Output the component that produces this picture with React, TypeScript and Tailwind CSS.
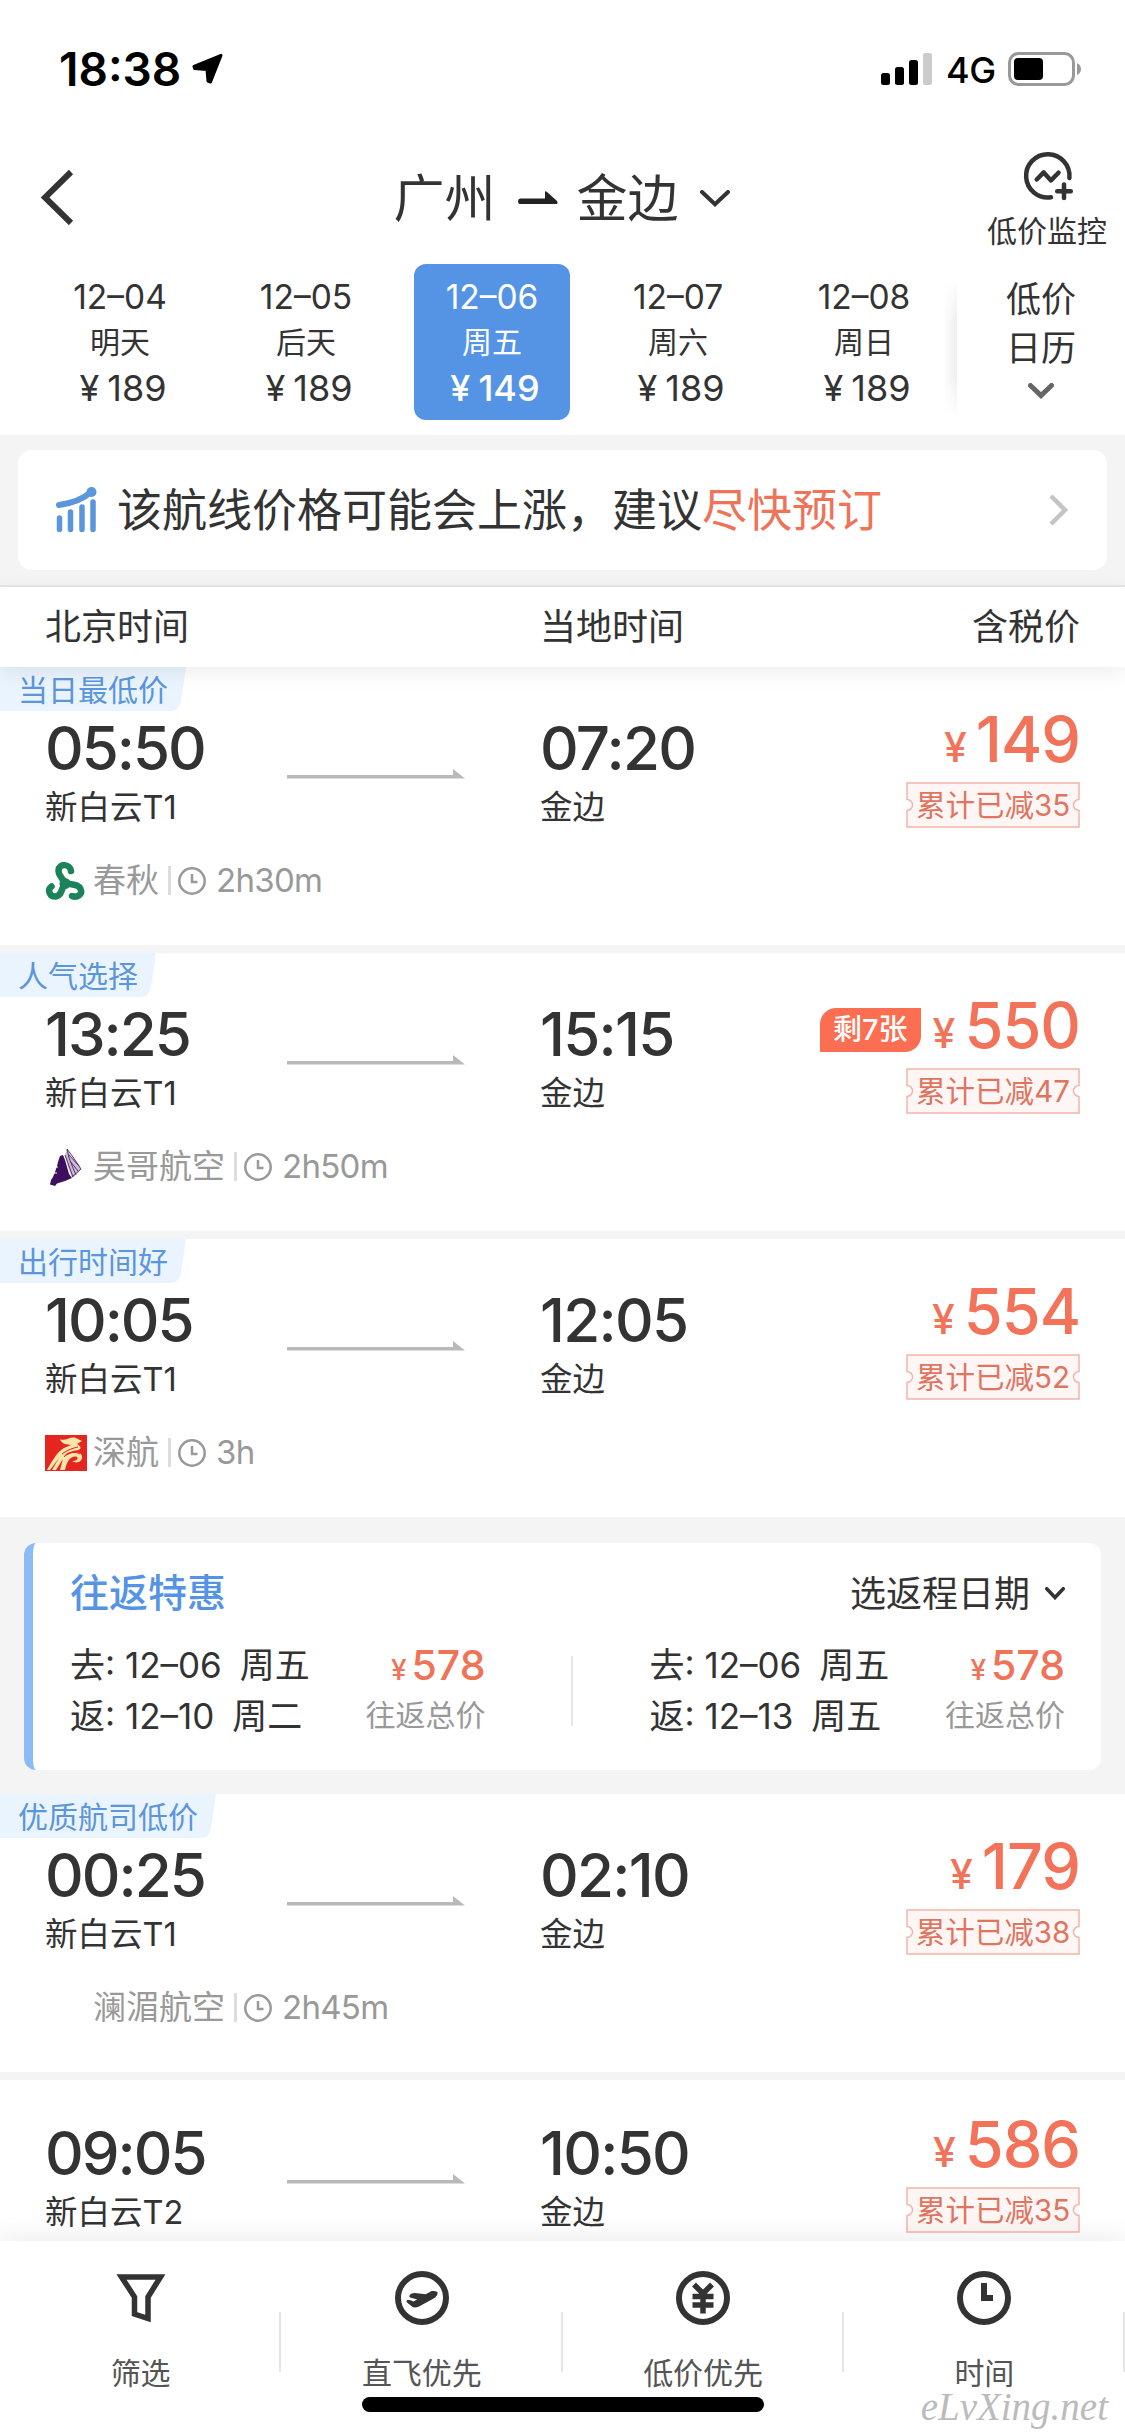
import React, { ReactNode } from "react";
import clsx from "clsx";

type Flight = {
  tag?: string;
  depart: string;
  arrive: string;
  from: string;
  to: string;
  price: string;
  discount: string;
  left?: string;
  airline?: string;
  logo?: ReactNode;
  duration?: string;
};

const dates = [
  { date: "12–04", day: "明天", price: "189" },
  { date: "12–05", day: "后天", price: "189" },
  { date: "12–06", day: "周五", price: "149", active: true },
  { date: "12–07", day: "周六", price: "189" },
  { date: "12–08", day: "周日", price: "189" },
];

const SpringLogo = () => (
  <svg width="40" height="40" viewBox="0 0 40 40" fill="none" stroke="#1c8259" strokeWidth="6.500" strokeLinecap="round">
    <path d="M26 10C25 2.500 14 2 13.500 9.500C13.200 14.500 18 17 19.500 22" />
    <path d="M6.500 25.500C2 29 4.500 36 11 35.500C17 34.500 16.500 27 20 22" />
    <path d="M27 35C32 37 38 33.500 35.500 28C33.500 22.500 27 24 20 22" />
    <circle cx="20" cy="22.500" r="5.500" fill="#1c8259" stroke="none" />
  </svg>
);

const AngkorLogo = () => (
  <svg width="40" height="40" viewBox="0 0 40 40">
    <path d="M15 9L18 8L20 13L22 20L24 27L27 31L20 34L12 36.500L10 39L5 37.500L6 33L8 30L10 25L12 19L13 15Z" fill="#3e0f5e" />
    <path d="M22 2L26 9L32 15L36 22L31 28L27 31L23 20L20 9Z" fill="#c9bbd2" />
    <path d="M22 2L24 11L28 21L31 28M20 8L28 30M24 8L34 19M25 14L33 24M27 30L36 22M22 2L28 10L36 22" stroke="#5b3573" strokeWidth="1" fill="none" />
    <path d="M10 20H13M8 26H12" stroke="#fff" strokeWidth="1" />
  </svg>
);

const ShenzhenLogo = () => (
  <svg width="42" height="36" viewBox="0 0 42 36">
    <rect width="42" height="36" fill="#e5251f" />
    <path
      d="M15 4C20 7 25 1 31 3L37 6L32 9C36 11 37 14 33 15C28 16 22 17 19 21C26 18 35 15 37 21C38 27 31 29 27 26C30 26 34 25 32 22C27 20 22 25 20 35H15L18 24L11 35H7L14 23L5 35H2C7 26 12 17 19 13L26 10C22 9 17 10 15 4Z"
      fill="#fbe3ac"
    />
    <path d="M17 19C22 15 28 13 33 12M19 22C24 17 30 16 35 19" stroke="#e5251f" strokeWidth="1" fill="none" />
  </svg>
);

const flights: Flight[] = [
  { tag: "当日最低价", depart: "05:50", arrive: "07:20", from: "新白云T1", to: "金边", price: "149", discount: "35", airline: "春秋", logo: <SpringLogo />, duration: "2h30m" },
  { tag: "人气选择", depart: "13:25", arrive: "15:15", from: "新白云T1", to: "金边", price: "550", discount: "47", left: "剩7张", airline: "吴哥航空", logo: <AngkorLogo />, duration: "2h50m" },
  { tag: "出行时间好", depart: "10:05", arrive: "12:05", from: "新白云T1", to: "金边", price: "554", discount: "52", airline: "深航", logo: <ShenzhenLogo />, duration: "3h" },
  { tag: "优质航司低价", depart: "00:25", arrive: "02:10", from: "新白云T1", to: "金边", price: "179", discount: "38", airline: "澜湄航空", duration: "2h45m" },
  { depart: "09:05", arrive: "10:50", from: "新白云T2", to: "金边", price: "586", discount: "35" },
];

const roundTrips = [
  { go: ["12–06", "周五"], back: ["12–10", "周二"], price: "578" },
  { go: ["12–06", "周五"], back: ["12–13", "周五"], price: "578" },
];

function Chevron({ width, height, stroke = 4, color = "#333" }: { width: number; height: number; stroke?: number; color?: string }) {
  return (
    <svg width={width} height={height} fill="none" stroke={color} strokeWidth={stroke} className="shrink-0">
      <path d={`M${stroke / 2} ${stroke / 2}L${width / 2} ${height - stroke * 0.7}L${width - stroke / 2} ${stroke / 2}`} strokeLinecap="round" />
    </svg>
  );
}

function StatusBar() {
  return (
    <div className="flex h-[138px] shrink-0 items-center justify-between pl-[59px] pr-[43px]">
      <div className="flex items-center gap-[11px]">
        <span className="text-[46px] leading-none font-semibold text-black">18:38</span>
        <svg width="31" height="30" viewBox="0 0 31 30">
          <path d="M29 1.500L18.500 28L16 27L15 15.500L2.500 14.500L2 12.500Z" stroke="#000" strokeWidth="3" strokeLinejoin="round" />
        </svg>
      </div>
      <div className="flex items-center">
        <svg width="52" height="34" viewBox="0 0 52 34">
          <rect x="0" y="21" width="9" height="12" rx="2.500" />
          <rect x="14" y="15" width="9" height="18" rx="2.500" />
          <rect x="28" y="8" width="9" height="25" rx="2.500" />
          <rect x="42" y="1" width="9" height="32" rx="2.500" fill="#ccc" />
        </svg>
        <span className="ml-[13px] w-[62px] pt-[2px] text-[36px] leading-none font-medium tracking-[-0.5px] text-black">4G</span>
        <svg width="74" height="36" viewBox="0 0 74 36">
          <rect x="1.500" y="2.500" width="64" height="31" rx="9" fill="none" stroke="#999" strokeWidth="3" />
          <rect x="6" y="7" width="29" height="22" rx="4" />
          <path d="M69 12Q73 14 73 18Q73 22 69 24Z" fill="#999" />
        </svg>
      </div>
    </div>
  );
}

function Header() {
  return (
    <div className="flex h-[118px] shrink-0 items-start">
      <div className="flex h-[118px] w-[250px] items-center pl-[40px]">
        <svg width="34" height="56" viewBox="0 0 34 56" fill="none" stroke="#333" strokeWidth="6">
          <path d="M31 3L5 28.500L31 54" />
        </svg>
      </div>
      <div className="flex h-[120px] flex-1 items-center justify-center pr-[2px] text-[51px] leading-none">
        <span>广州</span>
        <svg width="40" height="14" viewBox="0 0 40 14" className="mr-[19px] ml-[22px]">
          <path d="M2 7.500H27V1Q27 -0.500 29 1L39 10Q40.500 13 38 13H2Q0 13 0 10.500T2 7.500Z" fill="#222" />
        </svg>
        <span className="mr-[21px]">金边</span>
        <Chevron width={30} height={17} />
      </div>
      <div className="flex w-[250px] flex-col items-end pt-[12px] pr-[18px]">
        <svg width="54" height="54" viewBox="0 0 54 54" fill="none" stroke="#333" strokeWidth="4.500" strokeLinecap="round" className="mr-[31px]">
          <path d="M29 47.300A21.700 21.700 0 1 1 47.400 28" />
          <path d="M14.700 29.500L21.700 22.400L29 30.400L36.500 22.700" strokeLinejoin="round" />
          <path d="M42 34.500V48M35.200 41.200H48.800" />
        </svg>
        <span className="mt-[11px] text-[30px] leading-[32px]">低价监控</span>
      </div>
    </div>
  );
}

function DateStrip() {
  return (
    <div className="flex h-[179px] shrink-0">
      <div className="flex flex-1 gap-[30px] pt-[8px] pl-[42px]">
        {dates.map((d) => (
          <div
            key={d.date}
            className={clsx(
              "flex h-[156px] w-[156px] shrink-0 flex-col items-center rounded-[12px] pt-[11px] leading-[45px]",
              d.active && "bg-[#5594e5] text-white"
            )}
          >
            <span className="text-[33.500px]">{d.date}</span>
            <span className="text-[30px]">{d.day}</span>
            <span className={clsx("pt-[1px] pl-[6px] text-[36px]", d.active && "font-medium")}>
              <span className="mr-[8px]">¥</span>
              {d.price}
            </span>
          </div>
        ))}
      </div>
      <div className="mt-[20px] h-[145px] w-[14px] bg-linear-to-r from-transparent to-[#efefef] mask-y-from-70% mask-y-to-100%" />
      <div className="flex w-[168px] flex-col items-center pt-[19px] text-[35px] leading-[49px]">
        <span>低价</span>
        <span>日历</span>
        <div className="mt-[10px]">
          <Chevron width={26} height={16} stroke={5} color="#666" />
        </div>
      </div>
    </div>
  );
}

function Advice() {
  return (
    <div className="shrink-0 bg-[#f4f4f4] px-[18px] py-[15px]">
      <div className="flex h-[120px] items-center rounded-[14px] bg-white pl-[38px] pr-[39px]">
        <svg width="42" height="46" viewBox="0 0 42 46" fill="none" stroke="#5b95dc" strokeLinecap="round">
          <path d="M3 18Q24 15 35 5" strokeWidth="6" />
          <circle cx="35.500" cy="5" r="5" fill="#5b95dc" stroke="none" />
          <path d="M3.500 31V42.500M14.500 25V42.500M26 20V42.500M37 15V42.500" strokeWidth="5.500" />
        </svg>
        <p className="ml-[19px] flex-1 text-[45px] leading-none">
          该航线价格可能会上涨，建议<span className="text-[#ee7358]">尽快预订</span>
        </p>
        <svg width="20" height="32" viewBox="0 0 20 32" fill="none" stroke="#c4c4c4" strokeWidth="4.500">
          <path d="M3 2L17 16L3 30" />
        </svg>
      </div>
    </div>
  );
}

function Coupon({ amount }: { amount: string }) {
  return (
    <div className="relative flex h-[46px] w-[174px] items-center justify-center">
      <svg width="174" height="46" viewBox="0 0 174 46" className="absolute inset-0" fill="#fef5f5" stroke="#f2b5aa" strokeWidth="1.500">
        <path d="M1 1H173V17.500A5.500 5.500 0 0 0 173 28.500V45H1V28.500A5.500 5.500 0 0 0 1 17.500Z" />
      </svg>
      <span className="relative pt-[1px] text-[29.500px] leading-none text-[#df7560]">累计已减{amount}</span>
    </div>
  );
}

function FlightRow({ flight }: { flight: Flight }) {
  return (
    <div className="flex h-[278px] shrink-0 flex-col bg-white">
      {flight.tag ? (
        <div className="flex h-[44px]">
          <span className="h-[44px] bg-[#eaf4fe] pl-[18px] text-[30px] leading-[46px] text-[#5b95dc]">{flight.tag}</span>
          <svg width="18" height="44" viewBox="0 0 18 44">
            <path d="M0 0H18L13 34Q11.500 44 2 44H0Z" fill="#eaf4fe" />
          </svg>
        </div>
      ) : (
        <div className="h-[36px]" />
      )}
      <div className="flex h-[130px] pr-[45px] pl-[45px]">
        <div className="w-[242px]">
          <div className="pt-[2px] text-[60px] leading-[70px] font-medium tracking-[-2px]">{flight.depart}</div>
          <div className="text-[32.500px] leading-[50px]">{flight.from}</div>
        </div>
        <svg width="178" height="10" viewBox="0 0 178 10" className="mt-[58px]">
          <path d="M0 6H166V0L178 9.500H0Z" fill="#b9b9b9" />
        </svg>
        <div className="flex-1 pl-[75px]">
          <div className="pt-[2px] text-[60px] leading-[70px] font-medium tracking-[-1.700px]">{flight.arrive}</div>
          <div className="text-[32.500px] leading-[50px]">{flight.to}</div>
        </div>
        <div className="flex flex-col items-end">
          <div className="flex h-[71px] items-center text-[#f27359]">
            {flight.left && (
              <span className="mr-[12px] mb-[6px] h-[44px] rounded-tl-[16px] rounded-br-[16px] bg-[#fb6e52] px-[13px] text-[29px] leading-[43px] font-medium text-white">
                {flight.left}
              </span>
            )}
            <div className="flex items-baseline pb-[8px] leading-[60px] font-medium">
              <span className="mr-[9px] text-[41px]">¥</span>
              <span className="text-[63px] tracking-[-1px]">{flight.price}</span>
            </div>
          </div>
          <Coupon amount={flight.discount} />
        </div>
      </div>
      {flight.airline && (
        <div className="flex h-[79px] items-center pl-[45px] text-[33px] leading-none text-[#999]">
          <div className="mr-[6px] flex w-[42px] justify-start">{flight.logo}</div>
          <span>{flight.airline}</span>
          <span className="mr-[6px] ml-[9px] h-[29px] w-[3px] bg-[#ddd]" />
          <svg width="30" height="30" viewBox="0 0 30 30" fill="none" stroke="#999" strokeWidth="2.500">
            <circle cx="15" cy="15" r="12.700" />
            <path d="M15 8V16H20.500" />
          </svg>
          <span className="ml-[9px] text-[33px] tracking-[-0.700px]">{flight.duration}</span>
        </div>
      )}
    </div>
  );
}

function RoundTripCard() {
  return (
    <div className="shrink-0 bg-[#f4f4f4] px-[24px] pt-[18px] pb-[16px]">
      <div className="flex h-[227px] flex-col rounded-[12px] border-l-[9px] border-[#8cbcf6] bg-white pr-[36px] pl-[37px]">
        <div className="flex h-[97px] items-center justify-between pt-[2px]">
          <span className="text-[39px] leading-none font-medium text-[#5594e5]">往返特惠</span>
          <div className="flex items-center pt-[2px] text-[36px] leading-none">
            <span className="mr-[15px]">选返程日期</span>
            <Chevron width={20} height={13} stroke={3.5} />
          </div>
        </div>
        <div className="flex items-center">
          {roundTrips.map((t, i) => (
            <React.Fragment key={t.back[0]}>
              {i > 0 && <div className="mr-[77px] ml-[85px] h-[70px] w-[2px] bg-[#e8e8e8]" />}
              <div className="flex h-[102px] flex-1 justify-between text-[35px] leading-[51px]">
                <div className="whitespace-nowrap">
                  <div>
                    去: {t.go[0]} <span className="ml-[8px]">{t.go[1]}</span>
                  </div>
                  <div>
                    返: {t.back[0]} <span className="ml-[8px]">{t.back[1]}</span>
                  </div>
                </div>
                <div className="text-right">
                  <div className="h-[50px] text-[41px] font-medium text-[#ee7358]">
                    <span className="mr-[5px] text-[28px]">¥</span>
                    {t.price}
                  </div>
                  <div className="h-[51px] text-[30px] text-[#999]">往返总价</div>
                </div>
              </div>
            </React.Fragment>
          ))}
        </div>
      </div>
    </div>
  );
}

const tabs = [
  {
    label: "筛选",
    icon: <path d="M9.500 8H48.500L36 28V49.500L22.500 45V28L9.500 8Z" strokeWidth="5.500" />,
  },
  {
    label: "直飞优先",
    icon: (
      <>
        <circle cx="29" cy="29" r="24" strokeWidth="6" />
        <path
          d="M16.300 27.300Q17 24 22 24L32.700 25.300L38.700 22Q44 21.500 44.700 23.500Q45 26 42 28.700L26 37.500Q22 39 19.700 38L14 33.500Q12.500 31.500 15 31Q18 30.500 20.300 32.500L24.300 30.500L17 28.500Z"
          fill="#333"
          stroke="none"
        />
      </>
    ),
  },
  {
    label: "低价优先",
    icon: (
      <>
        <circle cx="29" cy="29" r="24" strokeWidth="6" />
        <path d="M20 15.500L29 24.500L38 15.500M18.500 27.500H39.500M18.500 36H39.500M29 23V44.500" strokeWidth="5.500" />
      </>
    ),
  },
  {
    label: "时间",
    icon: (
      <>
        <circle cx="29" cy="29" r="24" strokeWidth="6" />
        <path d="M29 14V29H38" strokeWidth="6" />
      </>
    ),
  },
];

function BottomBar() {
  return (
    <div className="relative z-10 flex h-[195px] shrink-0 bg-white shadow-[0_-4px_24px_rgba(0,0,0,0.08)]">
      {tabs.map((t) => (
        <div key={t.label} className="flex flex-1 items-start">
          <div className="flex flex-1 flex-col items-center pt-[28px] pl-[2px]">
            <svg width="58" height="58" viewBox="0 0 58 58" fill="none" stroke="#333">
              {t.icon}
            </svg>
            <span className="mt-[27px] text-[30px] leading-[38px] text-[#555]">{t.label}</span>
          </div>
          <div className="mt-[71px] h-[60px] w-[2px] bg-[#e6e6e6]" />
        </div>
      ))}
      <div className="absolute bottom-[24px] left-[362px] h-[15px] w-[402px] rounded-full bg-black" />
      <span className="absolute right-[17px] bottom-[10px] font-['Liberation_Serif',serif] text-[39px] leading-none text-[#bbb] italic">
        eLvXing.net
      </span>
    </div>
  );
}

export default function App() {
  return (
    <div className="flex h-[2436px] w-[1125px] flex-col overflow-hidden bg-white font-['Inter','Noto_Sans_CJK_SC',sans-serif] text-[#333]">
      <StatusBar />
      <Header />
      <DateStrip />
      <Advice />
      <div className="relative z-10 flex h-[82px] shrink-0 items-center border-t-[2px] border-[#e2e2e2] bg-white pr-[45px] pl-[45px] text-[36px] leading-none shadow-[0_6px_20px_rgba(0,0,0,0.07)]">
        <span className="w-[495px]">北京时间</span>
        <span className="flex-1">当地时间</span>
        <span>含税价</span>
      </div>
      <div className="flex min-h-0 flex-1 flex-col gap-[8px] overflow-hidden bg-[#f4f4f4]">
        {flights.slice(0, 3).map((f) => (
          <FlightRow key={f.depart} flight={f} />
        ))}
        <RoundTripCard />
        {flights.slice(3).map((f) => (
          <FlightRow key={f.depart} flight={f} />
        ))}
      </div>
      <BottomBar />
    </div>
  );
}
